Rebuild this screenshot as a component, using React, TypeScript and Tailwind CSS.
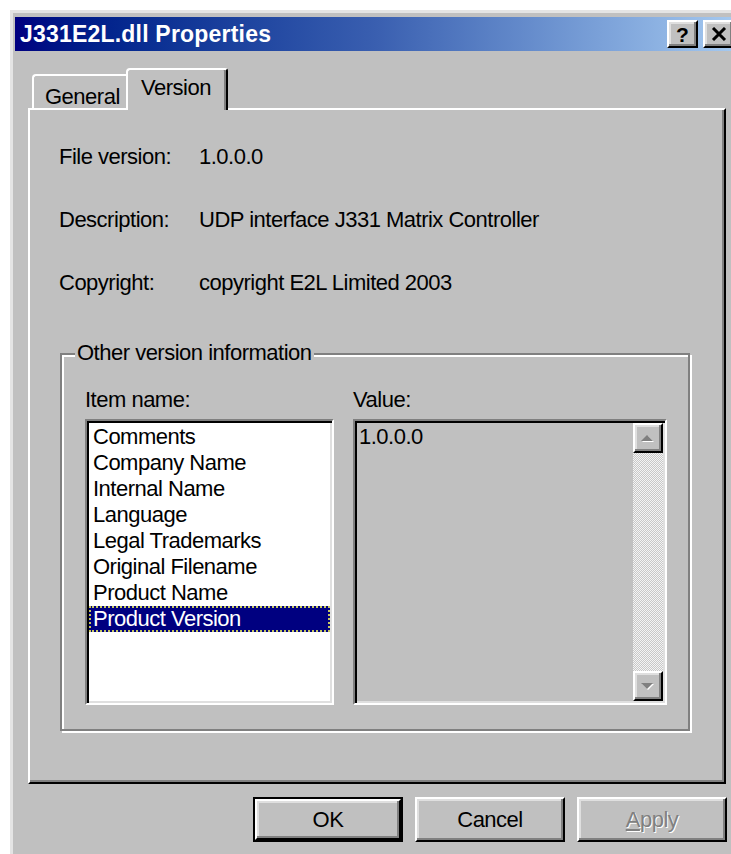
import React from "react";

const fields = [
  { label: "File version:", value: "1.0.0.0" },
  { label: "Description:", value: "UDP interface J331 Matrix Controller" },
  { label: "Copyright:", value: "copyright E2L Limited 2003" },
];

const items = [
  "Comments",
  "Company Name",
  "Internal Name",
  "Language",
  "Legal Trademarks",
  "Original Filename",
  "Product Name",
  "Product Version",
];

// raised 3d edge used by buttons and scroll arrows
const raised =
  "border-2 border-t-white border-l-white border-r-black border-b-black shadow-[inset_-2px_-2px_0_#808080,inset_2px_2px_0_#dfdfdf] bg-[#c0c0c0]";

// sunken edge used by list boxes
const sunken =
  "border-2 border-t-[#808080] border-l-[#808080] border-r-white border-b-white shadow-[inset_2px_2px_0_#000,inset_-2px_-2px_0_#dfdfdf]";

function ScrollArrow({ up }: { up?: boolean }) {
  return (
    <div className={`${raised} h-[30px] w-[30px] flex items-center justify-center`}>
      <svg width="16" height="10" viewBox="0 0 16 10">
        {up ? (
          <>
            <path d="M2 9 L8 3 L14 9 Z" fill="#fff" />
            <path d="M1 8 L7 2 L13 8 Z" fill="#808080" />
          </>
        ) : (
          <>
            <path d="M2 3 L8 9 L14 3 Z" fill="#fff" />
            <path d="M1 2 L7 8 L13 2 Z" fill="#808080" />
          </>
        )}
      </svg>
    </div>
  );
}

function CaptionButton({ children }: { children: React.ReactNode }) {
  return (
    <div className={`${raised} h-[28px] w-[31px] flex items-center justify-center`}>
      {children}
    </div>
  );
}

export default function App() {
  return (
    <div className="w-[731px] h-[854px] overflow-hidden bg-white pl-[10px] pt-[10px] font-['Liberation_Sans',Arial,sans-serif] text-[22px] tracking-[-0.5px] text-black">
      <div className="w-[740px] h-[860px] bg-[#c0c0c0] border-t-[3px] border-l-[3px] border-[#e4e4e4] pl-[2px] pt-[4px]">
        {/* Title bar */}
        <div className="w-[723px] h-[34px] flex items-center justify-between pl-[5px] pr-[4px] bg-linear-to-r from-[#000080] via-[#3a5fb0] to-[#a6caf0]">
          <span className="text-white font-bold text-[23px] tracking-[0.2px] leading-none">
            J331E2L.dll Properties
          </span>
          <div className="flex gap-[5px]">
            <CaptionButton>
              <span className="font-bold text-[21px] leading-none tracking-normal">?</span>
            </CaptionButton>
            <CaptionButton>
              <svg width="16" height="14" viewBox="0 0 16 14">
                <path d="M2 1 L14 13 M14 1 L2 13" stroke="#000" strokeWidth="3" />
              </svg>
            </CaptionButton>
          </div>
        </div>

        <div className="pl-[13px] pt-[17px]">
          {/* Tabs */}
          <div className="relative z-10 flex items-end h-[40px] pl-[4px]">
            <div className="w-[94px] h-[34px] border-t-2 border-l-2 border-white rounded-tl-[4px] pl-[11px] pt-[8px] leading-[26px]">
              General
            </div>
            <div className="w-[102px] h-[42px] -mb-[2px] bg-[#c0c0c0] border-t-2 border-l-2 border-r-2 border-t-white border-l-white border-r-black rounded-tl-[4px] rounded-tr-[3px] shadow-[inset_-2px_0_0_#808080] pl-[13px] pt-[5px] leading-[26px]">
              Version
            </div>
          </div>

          {/* Page */}
          <div className="w-[698px] h-[676px] border-2 border-t-white border-l-white border-r-black border-b-black shadow-[inset_-2px_-2px_0_#808080] pl-[29px] pt-[34px]">
            <div className="flex flex-col gap-[37px]">
              {fields.map((f) => (
                <div key={f.label} className="flex leading-[26px]">
                  <span className="w-[140px]">{f.label}</span>
                  <span>{f.value}</span>
                </div>
              ))}
            </div>

            {/* Other version information */}
            <div className="relative ml-[1px] mt-[57px] w-[630px] h-[378px] border-2 border-[#808080] shadow-[inset_2px_2px_0_#fff,2px_2px_0_#fff] pl-[23px] pr-[21px] pt-[32px]">
              <span className="absolute left-[13px] -top-[15px] bg-[#c0c0c0] px-[2px] leading-[26px]">
                Other version information
              </span>
              <div className="grid grid-cols-[249px_314px] gap-x-[19px]">
                <span className="leading-[26px] mb-[6px]">Item name:</span>
                <span className="leading-[26px] mb-[6px]">Value:</span>

                <div className={`${sunken} h-[286px] bg-white px-[2px] pt-[3px]`}>
                  {items.map((item) => (
                    <div
                      key={item}
                      className={`h-[26px] leading-[26px] pl-[4px] ${
                        item === "Product Version"
                          ? "bg-[#000080] text-white outline-2 outline-dotted outline-[#c8c860] -outline-offset-2"
                          : ""
                      }`}
                    >
                      {item}
                    </div>
                  ))}
                </div>

                <div className={`${sunken} h-[286px] bg-[#c0c0c0] flex p-[2px]`}>
                  <div className="flex-1 pl-[2px] pt-[1px] leading-[26px]">1.0.0.0</div>
                  <div className="w-[30px] flex flex-col">
                    <ScrollArrow up />
                    <div className="flex-1 bg-[repeating-conic-gradient(#c8c8c8_0%_25%,#f4f4f4_0%_50%)] bg-[length:2px_2px]" />
                    <ScrollArrow />
                  </div>
                </div>
              </div>
            </div>
          </div>

          {/* Dialog buttons */}
          <div className="w-[699px] mt-[13px] flex justify-end gap-[12px]">
            <div className="w-[150px] h-[45px] border-2 border-black">
              <div className={`${raised} w-full h-full flex items-center justify-center`}>OK</div>
            </div>
            <div className={`${raised} w-[150px] h-[45px] flex items-center justify-center`}>Cancel</div>
            <div
              className={`${raised} w-[150px] h-[45px] flex items-center justify-center text-[#808080] [text-shadow:1px_1px_0_#fff]`}
            >
              <span className="underline">A</span>pply
            </div>
          </div>
        </div>
      </div>
    </div>
  );
}
